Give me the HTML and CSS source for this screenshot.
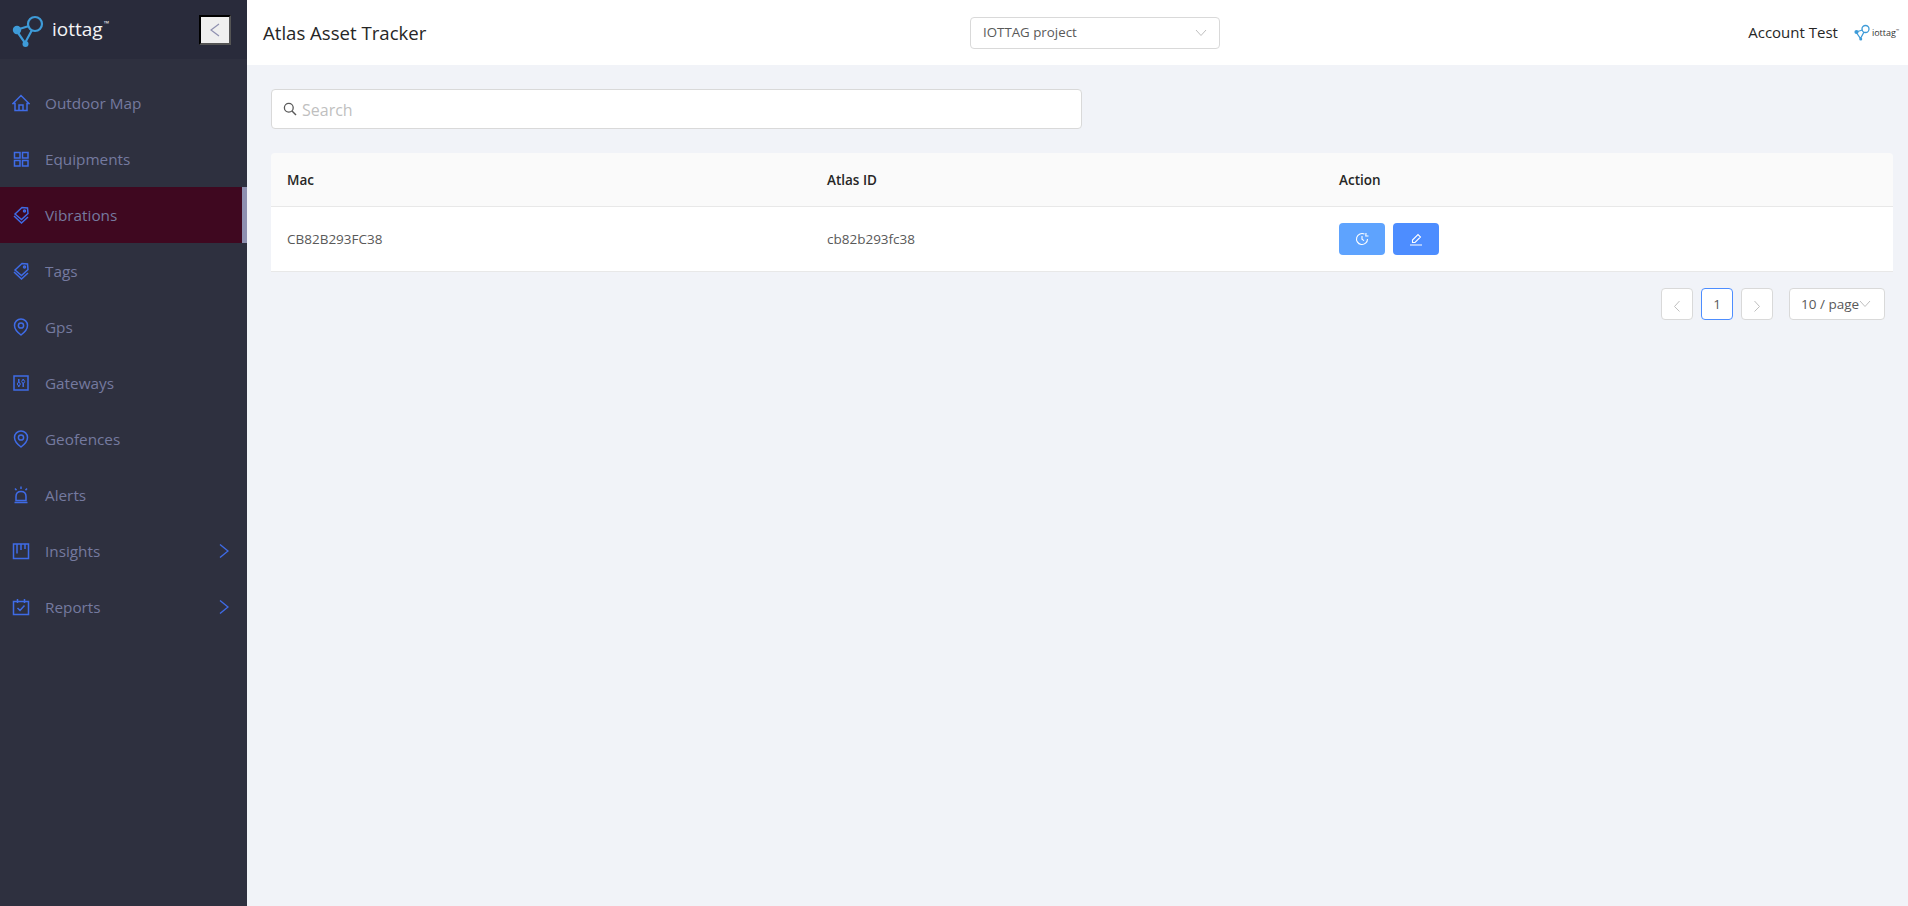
FILE: index.html
```html
<!DOCTYPE html>
<html lang="en">
<head>
<meta charset="utf-8">
<title>Atlas Asset Tracker</title>
<link rel="stylesheet" href="styles.css">
</head>
<body>
<div class="app">
  <aside class="sidebar">
    <div class="brand">
      <svg class="brand-logo" viewBox="0 0 34 34" width="34" height="34">
        <g fill="none" stroke="#3e9bd8" stroke-width="2.2">
          <circle cx="23" cy="10" r="7"/>
          <path d="M4 16 L17 12 M4 16 L13 29 L20 16"/>
        </g>
        <circle cx="5" cy="16" r="4.2" fill="#3e9bd8"/>
        <circle cx="13.5" cy="30" r="3" fill="#3e9bd8"/>
      </svg>
      <span class="brand-name">iottag<sup class="tm">™</sup></span>
      <button class="collapse" type="button" aria-label="Collapse">
        <svg viewBox="0 0 12 16" width="12" height="16"><path d="M10 2 L2 8 L10 14" fill="none" stroke="#8f90b0" stroke-width="1.2"/></svg>
      </button>
    </div>
    <nav class="menu">
      <a class="item"><svg class="ico" viewBox="0 0 18 18"><path d="M1 9.5 L9 1.5 L17 9.5 H15 V16.5 H3 V9.5 Z M7 16.5 V11 H11 V16.5"/></svg><span>Outdoor Map</span></a>
      <a class="item"><svg class="ico" viewBox="0 0 18 18"><path d="M2.5 2.5 H8 V8 H2.5 Z M10.5 2.5 H16 V8 H10.5 Z M2.5 10.5 H8 V16 H2.5 Z M10.5 10.5 H16 V16 H10.5 Z"/></svg><span>Equipments</span></a>
      <a class="item active"><svg class="ico" viewBox="0 0 18 18"><path d="M3 8 L10 1.5 L15.5 2 L16 7.5 L9.5 13.5 Z M2 10 L9.5 17 L16 11"/><circle cx="12.5" cy="5" r="1"/></svg><span>Vibrations</span></a>
      <a class="item"><svg class="ico" viewBox="0 0 18 18"><path d="M3 8 L10 1.5 L15.5 2 L16 7.5 L9.5 13.5 Z M2 10 L9.5 17 L16 11"/><circle cx="12.5" cy="5" r="1"/></svg><span>Tags</span></a>
      <a class="item"><svg class="ico" viewBox="0 0 18 18"><path d="M9 17 C5 14 2.5 11 2.5 7.5 A6.5 6.5 0 0 1 15.5 7.5 C15.5 11 13 14 9 17 Z"/><circle cx="9" cy="7.5" r="2.6"/></svg><span>Gps</span></a>
      <a class="item"><svg class="ico" viewBox="0 0 18 18"><path d="M2 2 H16 V16 H2 Z M6.8 5 V13 M11.2 5 V13"/><circle class="ico-dot" cx="6.8" cy="10" r="1.5"/><circle class="ico-dot" cx="11.2" cy="7.5" r="1.5"/></svg><span>Gateways</span></a>
      <a class="item"><svg class="ico" viewBox="0 0 18 18"><path d="M9 17 C5 14 2.5 11 2.5 7.5 A6.5 6.5 0 0 1 15.5 7.5 C15.5 11 13 14 9 17 Z"/><circle cx="9" cy="7.5" r="2.6"/></svg><span>Geofences</span></a>
      <a class="item"><svg class="ico" viewBox="0 0 18 18"><path d="M4 14.5 V10.5 C4 7.5 6 5.5 9 5.5 C12 5.5 14 7.5 14 10.5 V14.5 Z M2.5 16.5 H15.5 M9 .5 V3 M3 2.5 L4.5 4.2 M15 2.5 L13.5 4.2"/></svg><span>Alerts</span></a>
      <a class="item"><svg class="ico" viewBox="0 0 18 18"><path d="M1.5 2 H16.5 V16.5 H1.5 Z M5 2 V11.5 M9 2 V8 M13 2 V7"/></svg><span>Insights</span><svg class="arrow" viewBox="0 0 10 16"><path d="M1 1.5 L9 8 L1 14.5"/></svg></a>
      <a class="item"><svg class="ico" viewBox="0 0 18 18"><path d="M1.5 3.5 H16.5 V16.5 H1.5 Z M5.5 1 V5 M12.5 1 V5 M5.5 10 L8 12.5 L12.5 7.5"/></svg><span>Reports</span><svg class="arrow" viewBox="0 0 10 16"><path d="M1 1.5 L9 8 L1 14.5"/></svg></a>
    </nav>
  </aside>
  <div class="main">
    <header class="topbar">
      <h1 class="title">Atlas Asset Tracker</h1>
      <div class="project">
        <span class="project-name">IOTTAG project</span>
        <svg class="chev" viewBox="0 0 12 8"><path d="M1 1 L6 6.5 L11 1"/></svg>
      </div>
      <div class="account">
        <span class="account-name">Account Test</span>
        <span class="mini-logo">
          <svg viewBox="0 0 34 34" width="17" height="17">
            <g fill="none" stroke="#3e9bd8" stroke-width="2.6">
              <circle cx="23" cy="10" r="7"/>
              <path d="M4 16 L17 12 M4 16 L13 29 L20 16"/>
            </g>
            <circle cx="5" cy="16" r="4.2" fill="#3e9bd8"/>
            <circle cx="13.5" cy="30" r="3" fill="#3e9bd8"/>
          </svg>
          <span>iottag<sup class="tm-mini">™</sup></span>
        </span>
      </div>
    </header>
    <main class="content">
      <label class="search">
        <svg viewBox="0 0 14 14" width="14" height="14"><circle cx="5.8" cy="5.8" r="4.4" fill="none" stroke="#595959" stroke-width="1.3"/><path d="M9 9 L13 13" stroke="#595959" stroke-width="1.5"/></svg>
        <input type="text" placeholder="Search">
      </label>
      <div class="table">
        <div class="row head"><div class="cell">Mac</div><div class="cell">Atlas ID</div><div class="cell">Action</div></div>
        <div class="row body">
          <div class="cell">CB82B293FC38</div>
          <div class="cell">cb82b293fc38</div>
          <div class="cell actions">
            <button class="btn light" type="button" aria-label="History">
              <svg viewBox="0 0 14 14" width="14" height="14"><path d="M12.5 7 A5.5 5.5 0 1 1 9.5 2.1 M11 1 L10.8 4 L13.5 4 M7 4 V7.3 L9 8.6" fill="none" stroke="#fff" stroke-width="1.1"/></svg>
            </button>
            <button class="btn strong" type="button" aria-label="Edit">
              <svg viewBox="0 0 14 14" width="14" height="14"><path d="M1 13 H13 M3.5 10.5 V8 L9 2.5 L11.5 5 L6 10.5 Z" fill="none" stroke="#fff" stroke-width="1.1"/></svg>
            </button>
          </div>
        </div>
      </div>
      <div class="pager">
        <span class="page"><svg viewBox="0 0 8 12" width="8" height="12"><path d="M6.5 1 L1.5 6.5 L6.5 11.5" fill="none" stroke="#bfbfbf"/></svg></span>
        <span class="page current">1</span>
        <span class="page"><svg viewBox="0 0 8 12" width="8" height="12"><path d="M1.5 1 L6.5 6.5 L1.5 11.5" fill="none" stroke="#bfbfbf"/></svg></span>
        <span class="size">10 / page<svg class="chev" viewBox="0 0 12 8"><path d="M1 1 L6 6.5 L11 1"/></svg></span>
      </div>
    </main>
  </div>
</div>
</body>
</html>
```

FILE: styles.css
```css
* { box-sizing: border-box; }
html, body { margin: 0; height: 100%; }
body { font-family: "Open Sans", "Noto Sans", sans-serif; font-size: 13.5px; color: #595959; background: #f1f3f8; overflow: hidden; }
.app { display: flex; height: 906px; }

.sidebar { width: 247px; flex: none; background: #2e303f; }
.brand { height: 59px; background: #292b3b; display: flex; align-items: center; padding: 0 16px 0 12px; }
.brand-logo { flex: none; margin-top: 2px; }
.brand-name { color: #f4f4f6; font-size: 19px; margin-left: 6px; line-height: 1; }
.tm { font-size: 7px; vertical-align: 10px; line-height: 0; margin-left: 1px; }
.collapse { margin-left: auto; width: 32px; height: 30px; padding: 0; display: flex; align-items: center; justify-content: center; background: #efefef; border-width: 2px; border-style: solid; border-color: #000 #555 #555 #000; }

.menu { padding-top: 16px; display: flex; flex-direction: column; }
.item { height: 56px; display: flex; align-items: center; padding: 0 18px 0 12px; color: #757a9f; font-size: 15.3px; }
.item.active { background: #3f0820; border-right: 5px solid #8e8fb0; padding-right: 13px; }
.ico { width: 18px; height: 18px; margin-right: 15px; fill: none; stroke: #3f6be6; stroke-width: 1.5; flex: none; }
.ico-dot { fill: #2e303f; stroke-width: 1; }
.arrow { width: 10px; height: 16px; margin-left: auto; fill: none; stroke: #3f6be6; stroke-width: 1.4; }

.main { flex: 1; min-width: 0; display: flex; flex-direction: column; }
.topbar { height: 65px; background: #fff; display: grid; grid-template-columns: 707px 250px 1fr; align-items: center; padding-left: 16px; }
.title { margin: 0; font-size: 18.6px; font-weight: 400; color: #262626; }
.project { height: 32px; border: 1px solid #d9d9d9; border-radius: 4px; display: flex; align-items: center; justify-content: space-between; padding: 0 12px; color: #595959; font-size: 13.3px; }
.project-name { padding-bottom: 1px; }
.chev { width: 12px; height: 8px; fill: none; stroke: #bfbfbf; stroke-width: 1; flex: none; }
.account { display: flex; align-items: center; justify-content: flex-end; padding-right: 9px; }
.account-name { font-size: 15px; color: #262626; margin-right: 16px; padding-bottom: 2px; }
.mini-logo { display: flex; align-items: center; gap: 1px; font-size: 9px; color: #333; }
.tm-mini { font-size: 4px; vertical-align: 4px; line-height: 0; }

.content { padding: 24px 15px 0 24px; }
.search { width: 811px; height: 40px; background: #fff; border: 1px solid #d9d9d9; border-radius: 4px; display: flex; align-items: center; padding-left: 11px; gap: 5px; }
.search input { border: 0; outline: 0; flex: 1; min-width: 0; font: inherit; font-size: 16px; padding: 1px 0 0; background: transparent; color: #595959; }
.search input::placeholder { color: #bfbfbf; opacity: 1; }

.table { margin-top: 24px; border-radius: 4px 4px 0 0; overflow: hidden; }
.row { display: grid; grid-template-columns: 540px 512px 1fr; }
.row.head { height: 54px; background: #fafafa; border-bottom: 1px solid #e8e8e8; color: #262626; font-weight: 600; }
.row.body { height: 65px; background: #fff; border-bottom: 1px solid #e8e8e8; }
.cell { padding: 0 16px; display: flex; align-items: center; }
.actions { gap: 8px; }
.btn { width: 46px; height: 32px; border: 0; border-radius: 4px; padding: 0; display: flex; align-items: center; justify-content: center; }
.btn.light { background: #5ea3fe; }
.btn.strong { background: #4d8dff; }

.pager { display: flex; justify-content: flex-end; align-items: center; margin-top: 16px; padding-right: 8px; gap: 8px; }
.page { width: 32px; height: 32px; background: #fff; border: 1px solid #d9d9d9; border-radius: 4px; display: flex; align-items: center; justify-content: center; padding-top: 3px; color: #595959; }
.page.current { border-color: #4d8dff; padding-top: 0; }
.size { margin-left: 8px; width: 96px; height: 32px; background: #fff; border: 1px solid #d9d9d9; border-radius: 4px; display: flex; align-items: center; padding-left: 11px; color: #595959; white-space: nowrap; }
```
